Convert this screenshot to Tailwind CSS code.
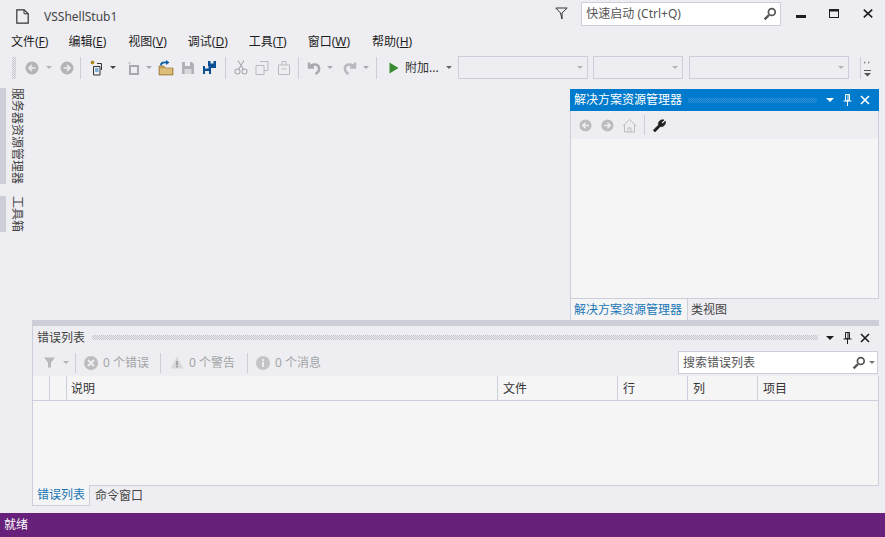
<!DOCTYPE html>
<html lang="zh">
<head>
<meta charset="utf-8">
<script src="https://cdn.jsdelivr.net/npm/@tailwindcss/browser@4"></script>
</head>
<body class="w-[885px] h-[537px] overflow-hidden bg-[#eeeef2] text-[#1e1e1e] text-[12px] leading-none font-['Noto_Sans','Noto_Sans_CJK_SC',sans-serif]">
<div class="flex flex-col h-[537px]">

  <!-- title bar -->
  <div class="h-[31px] flex items-start shrink-0">
    <svg class="ml-[16px] mt-[9px] shrink-0" width="13" height="15" viewBox="0 0 13 15" fill="none" stroke="#333" stroke-width="1.2"><path d="M.8.8h7.400l4 4v9.400H.8z"/><path d="M8 .8v4h4.200" stroke-width="1"/></svg>
    <span class="ml-[15px] mt-[11px] text-[#444]">VSShellStub1</span>
    <svg class="ml-[438px] mt-[7px] shrink-0" width="13" height="13" viewBox="0 0 13 13" fill="none" stroke="#333" stroke-width="1"><path d="M.8 1h11.400L7 6v6L5.500 6z"/></svg>
    <div class="ml-[13px] mt-[2px] w-[200px] h-[24px] bg-white border border-[#cccedb] flex items-center pl-[4px] text-[#555] shrink-0">
      <span>快速启动 (Ctrl+Q)</span>
      <svg class="ml-auto mr-[3px]" width="14" height="14" viewBox="0 0 14 14" fill="none" stroke="#555"><circle cx="8.800" cy="5" r="3.400" stroke-width="1.700"/><path d="M6 8 1.600 12.400" stroke-width="2.400"/></svg>
    </div>
    <svg class="ml-[15px] mt-[15px] shrink-0" width="10" height="3"><rect width="10" height="3" fill="#1e1e1e"/></svg>
    <svg class="ml-[23px] mt-[9px] shrink-0" width="10" height="9" fill="none" stroke="#1e1e1e"><rect x=".5" y=".5" width="9" height="8"/><path d="M0 1.500h10" stroke-width="2"/></svg>
    <svg class="ml-[24px] mt-[9px] shrink-0" width="10" height="9" fill="none" stroke="#1e1e1e" stroke-width="1.600"><path d="M.8.600l8.400 7.800M9.200.600.8 8.400"/></svg>
  </div>

  <!-- menu -->
  <div class="h-[22px] flex items-center shrink-0 text-[#1e1e1e]">
    <span class="ml-[11px]">文件(<u>F</u>)</span>
    <span class="ml-[20px]">编辑(<u>E</u>)</span>
    <span class="ml-[22px]">视图(<u>V</u>)</span>
    <span class="ml-[21px]">调试(<u>D</u>)</span>
    <span class="ml-[21px]">工具(<u>T</u>)</span>
    <span class="ml-[21px]">窗口(<u>W</u>)</span>
    <span class="ml-[22px]">帮助(<u>H</u>)</span>
  </div>

  <!-- toolbar -->
  <div class="h-[29px] flex items-center shrink-0 relative">
    <div class="ml-[12px] w-[4px] h-[22px] bg-[conic-gradient(#c4c4cc_25%,transparent_0_50%,#c4c4cc_0_75%,transparent_0)] bg-[length:2px_2px] shrink-0"></div>
    <svg class="ml-[9px] shrink-0" width="14" height="14" viewBox="0 0 14 14"><circle cx="7" cy="7" r="6.500" fill="#b4b4b8"/><path d="M10.500 7H4.500M7 4 4 7l3 3" stroke="#eeeef2" stroke-width="1.600" fill="none"/></svg>
    <span class="ml-[7px] w-0 h-0 border-x-[3px] border-x-transparent border-t-[3px] border-t-[#b4b4b8]"></span>
    <svg class="ml-[8px] shrink-0" width="14" height="14" viewBox="0 0 14 14"><circle cx="7" cy="7" r="6.500" fill="#b4b4b8"/><path d="M3.500 7h6M7 4l3 3-3 3" stroke="#eeeef2" stroke-width="1.600" fill="none"/></svg>
    <div class="ml-[6px] w-px h-[22px] bg-[#ccced8]"></div>
    <svg class="ml-[9px] shrink-0" width="14" height="16" viewBox="0 0 14 16" fill="none" stroke="#333"><path d="M1 1l3 3M4 1 1 4M2.500.500v4M.5 2.500h4" stroke="#b58a2b"/><path d="M7 3.500h4.500V10M3.500 6.500H10v8.500H3.500z"/><path d="M5 9h3.500M5 11h3.500" stroke="#0e70c0"/></svg>
    <span class="ml-[6px] w-0 h-0 border-x-[3px] border-x-transparent border-t-[3px] border-t-[#444]"></span>
    <svg class="ml-[11px] shrink-0" width="14" height="16" viewBox="0 0 14 16" fill="none" stroke="#a8a8ae"><path d="M1 3h3M2.500 1.500v3" stroke="#c8c8cc"/><rect x="3" y="6" width="8" height="8" stroke-width="2"/></svg>
    <span class="ml-[5px] w-0 h-0 border-x-[3px] border-x-transparent border-t-[3px] border-t-[#a8a8ae]"></span>
    <svg class="ml-[6px] shrink-0" width="16" height="16" viewBox="0 0 16 16"><path d="M1 6h5l1 2h8v7H1z" fill="#c8a35c" stroke="#8a6a2c" stroke-width=".6"/><path d="M2 8.500h12V14H2z" fill="#dcbd7a"/><path d="M2 5c0-3 3-4 6-3.500V0l3.500 2.500L8 5V3.500C5.500 3 4 4 3.500 6z" fill="#0e5fa8"/></svg>
    <svg class="ml-[7px] shrink-0" width="14" height="14" viewBox="0 0 14 14"><path d="M1 1h10l2 2v10H1z" fill="#b0b0b6"/><path d="M4 1h5v4H4z" fill="#eeeef2"/><path d="M3.500 8h7v5h-7z" fill="#d8d8dc"/></svg>
    <svg class="ml-[7px] shrink-0" width="15" height="15" viewBox="0 0 15 15"><path d="M6 1h8v7H9v1H6z" fill="#0b4f93"/><path d="M8.500 1h3v2.500h-3z" fill="#eeeef2"/><path d="M1 6h8v8H1z" fill="#0b4f93"/><path d="M3 6h3.500v2.500H3zM3 11h4v3H3z" fill="#eeeef2"/></svg>
    <div class="ml-[8px] w-px h-[22px] bg-[#ccced8]"></div>
    <svg class="ml-[8px] shrink-0" width="14" height="15" viewBox="0 0 14 15" fill="none" stroke="#a8a8ae" stroke-width="1.100"><circle cx="3.500" cy="11.500" r="2.500"/><circle cx="10.500" cy="11.500" r="2.500"/><path d="M9.500 9.500 4 .5M4.500 9.500 10 .5"/></svg>
    <svg class="ml-[7px] shrink-0" width="14" height="15" viewBox="0 0 14 15" fill="none" stroke="#b8b8be"><path d="M5 1.500h8v9H9"/><path d="M1 5.500h8v9H1z"/></svg>
    <svg class="ml-[8px] shrink-0" width="14" height="15" viewBox="0 0 14 15" fill="none" stroke="#b8b8be"><path d="M1.500 5h11v9.500h-11zM5 5V1.500h4V5M4.500 9h5"/></svg>
    <div class="ml-[7px] w-px h-[22px] bg-[#ccced8]"></div>
    <svg class="ml-[8px] shrink-0" width="14" height="14" viewBox="0 0 14 14" fill="none" stroke="#a8a8ae" stroke-width="2.400"><path d="M2 1.500v5h5"/><path d="M2.500 6C5 2.500 11 2.500 12 6.500c.5 3-1.500 5.500-3.500 6.500"/></svg>
    <span class="ml-[6px] w-0 h-0 border-x-[3px] border-x-transparent border-t-[3px] border-t-[#a8a8ae]"></span>
    <svg class="ml-[10px] shrink-0" width="14" height="14" viewBox="0 0 14 14" fill="none" stroke="#b8b8be" stroke-width="2.400"><path d="M12 1.500v5H7"/><path d="M11.500 6C9 2.500 3 2.500 2 6.500c-.5 3 1.500 5.500 3.500 6.500"/></svg>
    <span class="ml-[6px] w-0 h-0 border-x-[3px] border-x-transparent border-t-[3px] border-t-[#a8a8ae]"></span>
    <div class="ml-[7px] w-px h-[22px] bg-[#ccced8]"></div>
    <svg class="ml-[12px] shrink-0" width="10" height="12" viewBox="0 0 10 12"><path d="M.5.500 9.500 6 .5 11.500z" fill="#388a34"/></svg>
    <span class="ml-[6px] text-[#333]">附加...</span>
    <span class="ml-[7px] w-0 h-0 border-x-[3px] border-x-transparent border-t-[3px] border-t-[#666]"></span>
    <div class="ml-[6px] w-[130px] h-[23px] border border-[#cccedb] flex items-center justify-end pr-[4px] shrink-0"><span class="w-0 h-0 border-x-[3px] border-x-transparent border-t-[3px] border-t-[#b4b4b8]"></span></div>
    <div class="ml-[5px] w-[90px] h-[23px] border border-[#cccedb] flex items-center justify-end pr-[4px] shrink-0"><span class="w-0 h-0 border-x-[3px] border-x-transparent border-t-[3px] border-t-[#b4b4b8]"></span></div>
    <div class="ml-[6px] w-[160px] h-[23px] border border-[#cccedb] flex items-center justify-end pr-[4px] shrink-0"><span class="w-0 h-0 border-x-[3px] border-x-transparent border-t-[3px] border-t-[#b4b4b8]"></span></div>
    <div class="ml-[11px] w-px h-[22px] bg-[#ccced8]"></div>
    <svg class="ml-[3px] shrink-0" width="7" height="20" viewBox="0 0 7 20" fill="#555"><path d="M0 3l2 1.500L0 6zM4 3l2 1.500L4 6z" fill="#999"/><path d="M0 12h7v1H0zM0 15h7l-3.500 3.500z"/></svg>
  </div>

  <!-- top body -->
  <div class="h-[238px] flex shrink-0">
    <div class="w-[32px] shrink-0 pt-[6px] flex flex-col">
      <div class="h-[96px] flex">
        <div class="w-[6px] bg-[#ccced8]"></div>
        <div class="ml-[5px] [writing-mode:vertical-rl] [text-orientation:sideways] text-[#444] leading-[12px]">服务器资源管理器</div>
      </div>
      <div class="h-[36px] mt-[12px] flex">
        <div class="w-[6px] bg-[#ccced8]"></div>
        <div class="ml-[5px] [writing-mode:vertical-rl] [text-orientation:sideways] text-[#444] leading-[12px]">工具箱</div>
      </div>
    </div>
    <div class="flex-1"></div>
    <div class="w-[309px] mt-[7px] mr-[6px] flex flex-col shrink-0">
      <div class="h-[22px] bg-[#007acc] text-white flex items-center pl-[4px] shrink-0">
        <span class="whitespace-nowrap">解决方案资源管理器</span>
        <div class="ml-[6px] w-[129px] h-[5px] bg-[conic-gradient(#2f91d6_25%,transparent_0_50%,#2f91d6_0_75%,transparent_0)] bg-[length:2px_2px]"></div>
        <span class="ml-[9px] w-0 h-0 border-x-[4px] border-x-transparent border-t-[4px] border-t-white"></span>
        <svg class="ml-[9px]" width="9" height="12" viewBox="0 0 9 12" fill="none" stroke="#fff"><path d="M2.500.5h4v6h-4zM.5 7h8M4.500 7v5M5 1v5"/></svg>
        <svg class="ml-[8px]" width="10" height="10" viewBox="0 0 10 10" fill="none" stroke="#fff" stroke-width="1.600"><path d="m1 1 8 8M9 1 1 9"/></svg>
      </div>
      <div class="h-[28px] border-x border-[#cccedb] flex items-center shrink-0">
        <svg class="ml-[8px]" width="13" height="13" viewBox="0 0 14 14"><circle cx="7" cy="7" r="6.500" fill="#bcbcc0"/><path d="M10.500 7H4.500M7 4 4 7l3 3" stroke="#eeeef2" stroke-width="1.600" fill="none"/></svg>
        <svg class="ml-[9px]" width="13" height="13" viewBox="0 0 14 14"><circle cx="7" cy="7" r="6.500" fill="#bcbcc0"/><path d="M3.500 7h6M7 4l3 3-3 3" stroke="#eeeef2" stroke-width="1.600" fill="none"/></svg>
        <svg class="ml-[8px]" width="15" height="15" viewBox="0 0 15 15" fill="none" stroke="#bcbcc0"><path d="M.8 8 7.500 1.500 14.200 8M2.500 7v7h10V7M6 14v-4h3v4"/></svg>
        <div class="ml-[7px] w-px h-[20px] bg-[#ccced8]"></div>
        <svg class="ml-[8px]" width="13" height="13" viewBox="0 0 13 13"><path d="M.5 11.500C.5 10.500 1.500 10 2.500 9L5.500 6C4.500 3 7.500 0 11 1L8.500 3.500l1.200 1.200L12.300 2c1 3.500-2 6.500-5 5.500L4 11c-1 1-1.500 2-2.500 1.700z" fill="#1e1e1e" stroke="#1e1e1e" stroke-width=".6"/></svg>
      </div>
      <div class="flex-1 bg-[#f5f5f5] border border-t-0 border-[#cccedb]"></div>
      <div class="h-[21px] flex items-stretch shrink-0">
        <div class="bg-[#f5f5f5] border-x border-[#cccedb] flex items-center pl-[3px] text-[#1b75b5] w-[118px] whitespace-nowrap">解决方案资源管理器</div>
        <div class="pl-[3px] flex items-center text-[#444]">类视图</div>
      </div>
    </div>
  </div>

  <!-- bottom panel -->
  <div class="h-[186px] ml-[32px] mr-[6px] flex flex-col shrink-0 border-t-[6px] border-[#ccced8]">
    <div class="h-[23px] flex items-center pl-[4px] border-l border-[#cccedb] shrink-0">
      <span class="text-[#444]">错误列表</span>
      <div class="ml-[7px] w-[726px] h-[5px] bg-[conic-gradient(#c4c4cc_25%,transparent_0_50%,#c4c4cc_0_75%,transparent_0)] bg-[length:2px_2px]"></div>
      <span class="ml-[8px] w-0 h-0 border-x-[4px] border-x-transparent border-t-[4px] border-t-[#1e1e1e]"></span>
      <svg class="ml-[9px]" width="9" height="12" viewBox="0 0 9 12" fill="none" stroke="#1e1e1e"><path d="M2.500.5h4v6h-4zM.5 7h8M4.500 7v5M5 1v5"/></svg>
      <svg class="ml-[8px]" width="10" height="10" viewBox="0 0 10 10" fill="none" stroke="#1e1e1e" stroke-width="1.600"><path d="m1 1 8 8M9 1 1 9"/></svg>
    </div>
    <div class="h-[27px] flex items-center border-l border-[#cccedb] shrink-0 text-[#a2a4a5]">
      <svg class="ml-[11px]" width="11" height="11" viewBox="0 0 11 11"><path d="M0 .5h11L7 5.500V10.500H4V5.500z" fill="#b8b8bc"/></svg>
      <span class="ml-[8px] w-0 h-0 border-x-[3px] border-x-transparent border-t-[3px] border-t-[#b4b4b8]"></span>
      <div class="ml-[6px] w-px h-[20px] bg-[#ccced8]"></div>
      <svg class="ml-[8px]" width="14" height="14" viewBox="0 0 14 14"><circle cx="7" cy="7" r="7" fill="#bcbcc0"/><path d="m4 4 6 6M10 4l-6 6" stroke="#eeeef2" stroke-width="2"/></svg>
      <span class="ml-[5px] w-[46px] whitespace-nowrap">0 个错误</span>
      <div class="ml-[11px] w-px h-[20px] bg-[#ccced8]"></div>
      <svg class="ml-[9px]" width="14" height="13" viewBox="0 0 14 13"><path d="M7 .5 13.500 12.500H.5z" fill="#d8d8dc"/><path d="M6.200 5h1.600v4.500H6.200zM6.200 10h1.600v1.500H6.200z" fill="#9a9a9e"/></svg>
      <span class="ml-[5px] w-[47px] whitespace-nowrap">0 个警告</span>
      <div class="ml-[11px] w-px h-[20px] bg-[#ccced8]"></div>
      <svg class="ml-[8px]" width="14" height="14" viewBox="0 0 14 14"><circle cx="7" cy="7" r="7" fill="#c4c4c8"/><path d="M6 3h2v2H6zM6 6h2v5H6z" fill="#eeeef2"/></svg>
      <span class="ml-[5px] whitespace-nowrap">0 个消息</span>
      <div class="ml-auto mr-px w-[200px] h-[23px] bg-white border border-[#cccedb] flex items-center pl-[4px] text-[#555]">
        <span>搜索错误列表</span>
        <svg class="ml-auto" width="14" height="14" viewBox="0 0 14 14" fill="none" stroke="#555"><circle cx="8.800" cy="5" r="3.400" stroke-width="1.700"/><path d="M6 8 1.600 12.400" stroke-width="2.400"/></svg>
        <span class="ml-[3px] mr-[2px] w-0 h-0 border-x-[3px] border-x-transparent border-t-[3px] border-t-[#777]"></span>
      </div>
    </div>
    <div class="h-[25px] flex items-stretch bg-[#f5f5f5] border-l border-r border-b border-[#cccedb] shrink-0 text-[#333]">
      <div class="w-[17px] border-r border-[#cccedb]"></div>
      <div class="w-[17px] border-r border-[#cccedb]"></div>
      <div class="w-[431px] border-r border-[#cccedb] pl-[4px] pt-px flex items-center">说明</div>
      <div class="w-[120px] border-r border-[#cccedb] pl-[5px] pt-px flex items-center">文件</div>
      <div class="w-[70px] border-r border-[#cccedb] pl-[5px] pt-px flex items-center">行</div>
      <div class="w-[70px] border-r border-[#cccedb] pl-[5px] pt-px flex items-center">列</div>
      <div class="flex-1 pl-[5px] pt-px flex items-center">项目</div>
    </div>
    <div class="flex-1 bg-[#f5f5f5] border-x border-[#cccedb]"></div>
    <div class="h-[21px] border-t border-[#cccedb] flex items-stretch shrink-0">
      <div class="bg-[#f5f5f5] border-x border-b border-[#cccedb] w-[58px] pl-[4px] flex items-center text-[#1b75b5] -mt-px">错误列表</div>
      <div class="pl-[5px] flex items-center text-[#444]">命令窗口</div>
    </div>
  </div>

  <div class="h-[7px] shrink-0"></div>
  <div class="h-[24px] bg-[#68217a] text-white flex items-center pl-[4px] shrink-0">就绪</div>
</div>
</body>
</html>
